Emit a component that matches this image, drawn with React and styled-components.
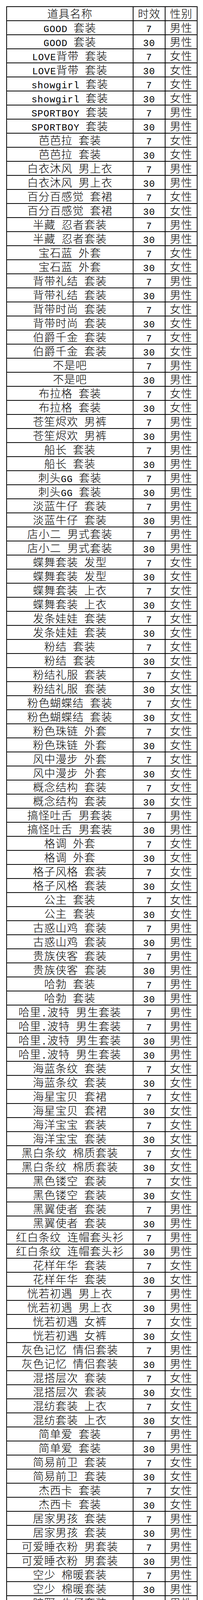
import React from 'react';
import styled, { createGlobalStyle } from 'styled-components';

const GlobalStyle = createGlobalStyle`
    html, body {
        margin: 0;
        padding: 0;
        background: #ffffff;
    }
`;

const Page = styled.div`
    padding: 16px 16px 0;
    background: #ffffff;
`;

const Sheet = styled.table`
    width: 488px;
    border-collapse: collapse;
    table-layout: fixed;
    border: 2px solid #000000;
    font-family: "Liberation Mono", "Noto Sans CJK SC", monospace;
    color: #000000;
`;

const Cell = styled.td`
    padding: 0;
    border: 2px solid #000000;
    vertical-align: top;
    font-weight: 400;
`;

const HeadCell = styled(Cell).attrs({ as: 'th' })``;

const Box = styled.div`
    box-sizing: border-box;
    height: 34px;
    padding-top: 7px;
    text-align: center;
    font-size: 28px;
    font-weight: 300;
    line-height: 28px;
    letter-spacing: 1px;
    white-space: pre;
`;

const Latin = styled.span`
    font-size: 24px;
    font-weight: 400;
`;

// 名称里的英文、数字、空格按半角宽度显示
const Name = ({ text }) => (
    <>
        {text.split(/([\x00-\x7F]+)/).filter(Boolean).map((part, i) =>
            /^[\x00-\x7F]+$/.test(part)
                ? <Latin key={i}>{part}</Latin>
                : <React.Fragment key={i}>{part}</React.Fragment>
        )}
    </>
);

const items = [
    ['GOOD 套装', '男'],
    ['LOVE背带 套装', '女'],
    ['showgirl 套装', '女'],
    ['SPORTBOY 套装', '男'],
    ['芭芭拉 套装', '女'],
    ['白衣沐风 男上衣', '男'],
    ['百分百感觉 套裙', '女'],
    ['半藏 忍者套装', '男'],
    ['宝石蓝 外套', '女'],
    ['背带礼结 套装', '男'],
    ['背带时尚 套装', '女'],
    ['伯爵千金 套装', '女'],
    ['不是吧', '男'],
    ['布拉格 套装', '女'],
    ['苍笙烬欢 男裤', '男'],
    ['船长 套装', '男'],
    ['刺头GG 套装', '男'],
    ['淡蓝牛仔 套装', '男'],
    ['店小二 男式套装', '男'],
    ['蝶舞套装 发型', '女'],
    ['蝶舞套装 上衣', '女'],
    ['发条娃娃 套装', '女'],
    ['粉结 套装', '女'],
    ['粉结礼服 套装', '女'],
    ['粉色蝴蝶结 套装', '女'],
    ['粉色珠链 外套', '女'],
    ['风中漫步 外套', '女'],
    ['概念结构 套装', '女'],
    ['搞怪吐舌 男套装', '男'],
    ['格调 外套', '女'],
    ['格子风格 套装', '女'],
    ['公主 套装', '女'],
    ['古惑山鸡 套装', '男'],
    ['贵族侠客 套装', '男'],
    ['哈勃 套装', '男'],
    ['哈里.波特 男生套装', '男', 2],
    ['海蓝条纹 套装', '女'],
    ['海星宝贝 套裙', '女'],
    ['海洋宝宝 套装', '女'],
    ['黑白条纹 棉质套装', '女'],
    ['黑色镂空 套装', '女'],
    ['黑翼使者 套装', '男'],
    ['红白条纹 连帽套头衫', '男'],
    ['花样年华 套装', '女'],
    ['恍若初遇 男上衣', '男'],
    ['恍若初遇 女裤', '女'],
    ['灰色记忆 情侣套装', '男'],
    ['混搭层次 套装', '女'],
    ['混纺套装 上衣', '女'],
    ['简单爱 套装', '男'],
    ['简易前卫 套装', '女'],
    ['杰西卡 套装', '女'],
    ['居家男孩 套装', '男'],
    ['可爱睡衣粉 男套装', '男'],
    ['空少 棉暖套装', '男'],
    ['旷野 牛仔套装', '男'],
    ['拉风 套装', '女'],
    ['兰格套装', '女'],
    ['冷酷到底 套装', '男'],
    ['路演少年 套装', '男'],
    ['绿格 套装', '女'],
    ['迈阿密 套装', '女'],
    ['猫人 情侣套装', '男'],
    ['猫王 多彩套装', '男'],
    ['魔法预言师 套装', '男'],
    ['默语白书 女上衣', '女'],
    ['木乃伊归来 套装', '男'],
    ['男生 休闲套装', '男'],
    ['纽约 套装', '女'],
    ['欧泊 套装', '女'],
    ['亲亲', '男'],
    ['青龙 忍者套装', '男'],
    ['青色休闲套装', '男'],
    ['清纯学生 男套装', '男'],
    ['深色连帽外套', '男'],
    ['圣诞天使 男套装', '男'],
    ['十字 收身外套', '男'],
    ['时光 套装', '女'],
    ['首尔街头 套装', '男'],
    ['水洗色 修身外套', '男'],
    ['舞者 天蓝外套', '男'],
    ['西式风度 套装', '男'],
    ['西雅图 套装', '女'],
    ['小可爱 套裙', '女'],
    ['新式 牛仔套装', '男'],
    ['兄弟连 男生套装', '男'],
    ['雪宝宝', '男'],
    ['野餐郊游 套装', '女'],
    ['英伦 套装', '男'],
    ['制服套装 短裙', '女'],
    ['制服套装 发型', '女'],
    ['制服套装 上衣', '女'],
    ['制服套装 长靴', '女'],
    ['仲冬印象 套装', '女'],
    ['周星星 经典套装', '男'],
    ['紫晶 套装', '女'],
    ['紫色小厨娘 套装', '女'],
    ['自由夏日 套装', '女'],
    ['棕色 层叠套装', '男'],
];

const rows = items.flatMap(([name, sex, times = 1]) => {
    const list = [];
    ['7', '30'].forEach((days) => {
        for (let i = 0; i < times; i++) list.push({ name, days, sex: sex + '性' });
    });
    return list;
});

const App = () => {
    return (
        <Page>
            <GlobalStyle />
            <Sheet>
                <colgroup>
                    <col style={{ width: 324 }} />
                    <col style={{ width: 82 }} />
                    <col style={{ width: 82 }} />
                </colgroup>
                <thead>
                    <tr>
                        <HeadCell><Box>道具名称</Box></HeadCell>
                        <HeadCell><Box>时效</Box></HeadCell>
                        <HeadCell><Box>性别</Box></HeadCell>
                    </tr>
                </thead>
                <tbody>
                    {rows.map((row, i) => (
                        <tr key={i}>
                            <Cell><Box><Name text={row.name} /></Box></Cell>
                            <Cell><Box><Latin>{row.days}</Latin></Box></Cell>
                            <Cell><Box>{row.sex}</Box></Cell>
                        </tr>
                    ))}
                </tbody>
            </Sheet>
        </Page>
    );
}

export default App;
